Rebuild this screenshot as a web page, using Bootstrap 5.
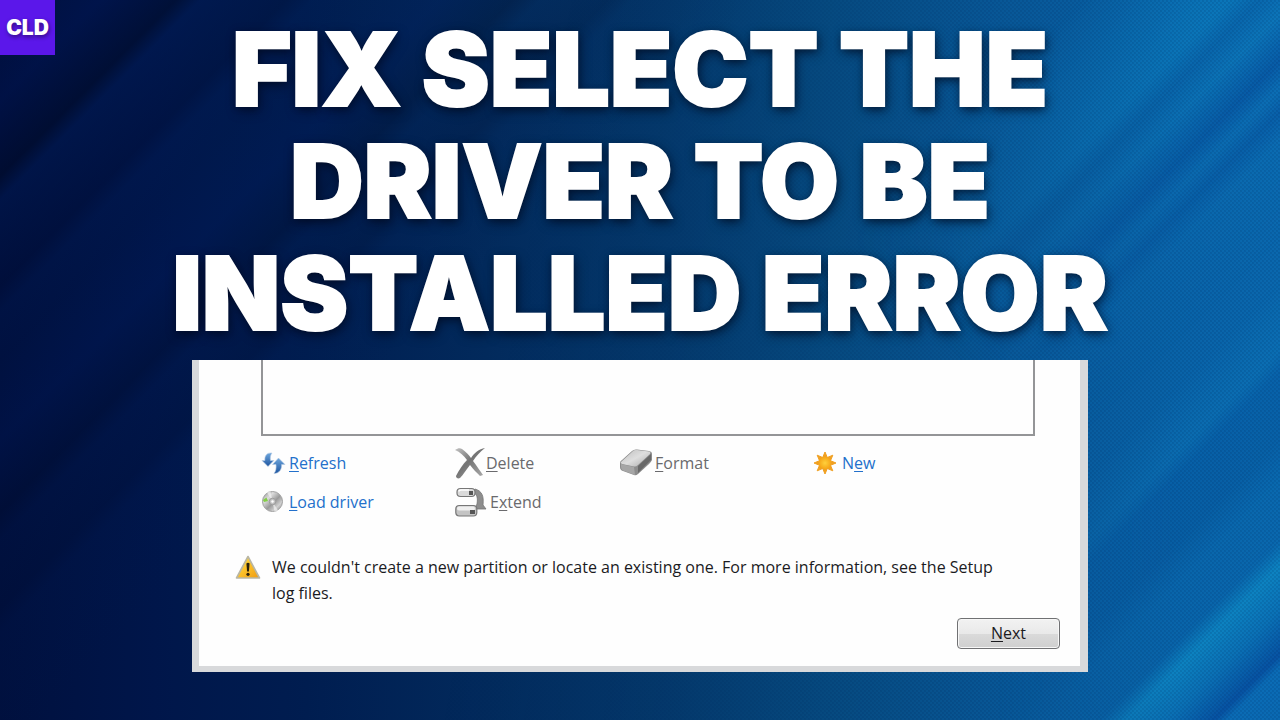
<!DOCTYPE html>
<html lang="en">
<head>
<meta charset="utf-8">
<meta name="viewport" content="width=device-width, initial-scale=1">
<title>Fix Select The Driver To Be Installed Error</title>
<link href="https://cdn.jsdelivr.net/npm/bootstrap@5.3.0/dist/css/bootstrap.min.css" rel="stylesheet">
<style>
  body {
    font: 16px/26px "Open Sans", "Noto Sans", sans-serif;
    background:
      /* dark folds on the left */
      linear-gradient(135deg,
        rgba(0,8,40,.1) 0%, rgba(0,20,90,.25) 5%, rgba(0,8,32,.45) 8.8%, rgba(0,26,84,.4) 10%,
        rgba(0,10,48,.25) 14.3%, rgba(0,28,88,.2) 15.6%, rgba(0,24,80,.1) 18%,
        rgba(0,24,90,.25) 22%, rgba(0,8,34,.25) 25.6%, rgba(0,20,66,.1) 27%, rgba(0,12,46,.2) 30.4%,
        rgba(0,26,80,.1) 31.6%, rgba(0,26,80,0) 38%),
      linear-gradient(90deg, #00103e 0%, #00164a 12%, #001d50 24%, #022a5c 38%, #04386b 52%, #064a80 65%, #085898 79%, #0963a8 92%, #0a68ae 100%);
  }
  /* light rays, each layer fading out towards the lower left */
  .rays-high {
    background: linear-gradient(135deg,
      rgba(12,130,195,0) 54%, rgba(12,130,195,.6) 61.5%, rgba(10,110,180,.2) 63%, rgba(14,130,195,.5) 64.7%,
      rgba(5,80,160,.5) 67%, rgba(14,120,190,.45) 68.4%, rgba(5,80,160,.35) 69.6%,
      rgba(14,116,186,.4) 71%, rgba(10,105,178,0) 76%);
    -webkit-mask-image: linear-gradient(45deg, transparent 66%, #000 95%);
    mask-image: linear-gradient(45deg, transparent 66%, #000 95%);
  }
  .rays-low {
    background: linear-gradient(135deg,
      rgba(14,124,190,0) 78%, rgba(14,124,190,.35) 81.5%, rgba(5,90,165,.35) 82.6%, rgba(5,86,156,.35) 86%,
      rgba(10,110,180,.3) 88%, rgba(10,105,175,.25) 91%, rgba(14,138,198,.8) 92.3%, rgba(12,120,188,.6) 94.5%,
      rgba(6,78,160,.8) 96.7%, rgba(12,112,188,.6) 97.4%, rgba(12,108,184,.4) 100%);
    -webkit-mask-image: linear-gradient(90deg, transparent 78%, #000 92%);
    mask-image: linear-gradient(90deg, transparent 78%, #000 92%);
  }
  /* fine woven texture, fading in towards the right */
  .weave {
    background: repeating-conic-gradient(rgba(0,30,80,.12) 0 25%, transparent 0 50%) 0 0 / 4px 4px;
    -webkit-mask-image: linear-gradient(100deg, transparent 40%, #000 75%);
    mask-image: linear-gradient(100deg, transparent 40%, #000 75%);
  }
  .brand { width: 55px; height: 55px; background: #5b17ea; font: 900 21px/1 Inter, sans-serif; text-shadow: 1px 2px 4px rgba(0,0,0,.45); }
  .headline { font: 900 102px/112px Inter, sans-serif; padding-top: 13px; margin-bottom: 11px; -webkit-text-stroke: 2px #fff; text-shadow: 2px 4px 12px rgba(0,8,26,.65), 0 2px 6px rgba(0,8,26,.35); }
  .setup { width: 70%; background: #fefefe; border: solid #d8d9db; border-width: 0 8px 6px 7px; color: #1b1b1f; padding-bottom: 17px; }
  .inset { margin: 0 45px 0 62px; }
  .partitions { height: 76px; border: solid #949597; border-width: 0 2px 2px; }
  .tools { display: grid; grid-template-columns: 194fr 165fr 194fr 221fr; grid-auto-rows: 39px; padding-top: 7px; }
  .tool { border: 0; background: none; padding: 0; color: #2370cb; text-decoration: none; white-space: nowrap; justify-self: start; }
  .tool:disabled { color: #6a6a6d; }
  .tool u, .next u { text-underline-offset: 2px; text-decoration-thickness: 1px; }
  .slim { width: 28px; flex: none; }
  .mid { width: 31px; flex: none; }
  .wide { width: 35px; flex: none; }
  .notice { margin: 33px 45px 12px 36px; gap: 11px; }
  .next { width: 103px; height: 31px; margin-right: 20px; padding: 0 0 2px; border: 1px solid #707173; border-radius: 4px; box-shadow: inset 0 0 0 1px #f7f7f7; background: linear-gradient(#f2f2f2 0, #e9e9e9 50%, #dadada 52%, #cfcfcf 100%); color: #1b1b1f; font-size: 16px; line-height: 26px; }
</style>
</head>
<body class="min-vh-100 position-relative">
<div class="rays-high position-absolute top-0 start-0 w-100 h-100"></div>
<div class="rays-low position-absolute top-0 start-0 w-100 h-100"></div>
<div class="weave position-absolute top-0 start-0 w-100 h-100"></div>
<header class="brand position-absolute top-0 start-0 d-flex align-items-center justify-content-center text-white">CLD</header>
<main class="position-relative d-flex flex-column align-items-center">
  <h1 class="headline text-white text-center text-nowrap">FIX SELECT THE<br>DRIVER TO BE<br>INSTALLED ERROR</h1>
  <section class="setup">
    <div class="inset">
      <div class="partitions"></div>
      <div class="tools">
        <a class="tool d-flex align-items-center" href="#">
          <svg class="slim" height="24" viewBox="0 0 28 24">
            <defs><linearGradient id="blue" x2="0" y2="1"><stop stop-color="#6fa8de"/><stop offset="1" stop-color="#1d549f"/></linearGradient></defs>
            <path d="M11 2C5.500 1.500 3.500 5 3.900 9.500H1L7 15.500 12.800 9.500H9.500C9 6 9.500 4 11 2Z" fill="url(#blue)" stroke="#b9cce4" stroke-width=".6"/>
            <path d="M13 22.500C18.500 22.500 21 18 20.600 13.500H24L17.500 7 11.500 13.500H15C15.300 17 15 20 13 22.500Z" fill="url(#blue)" stroke="#b9cce4" stroke-width=".6"/>
          </svg><span><u>R</u>efresh</span></a>
        <button class="tool d-flex align-items-center" type="button" disabled>
          <svg class="mid" height="32" viewBox="0 0 31 32">
            <defs><linearGradient id="cross" x2="1" y2="1"><stop stop-color="#c4c4c4"/><stop offset=".45" stop-color="#747474"/><stop offset="1" stop-color="#b0b0b0"/></linearGradient></defs>
            <path d="M0 3C3 1 5 1 7 2 11 5 14 8 16 11 19 6 24 2 30 1 25 5 21 9 18 14 22 19 25 24 28 28L25 29C22 26 18 22 15 18 11 23 8 28 5 31 3 32 1 31 1 29 4 23 8 17 12 13 9 9 5 5 0 3Z" fill="url(#cross)"/>
          </svg><span><u>D</u>elete</span></button>
        <button class="tool d-flex align-items-center" type="button" disabled>
          <svg class="wide" height="30" viewBox="0 0 35 30">
            <defs><linearGradient id="top" x2="1" y2="1"><stop stop-color="#bdbdbd"/><stop offset=".5" stop-color="#dedede"/><stop offset="1" stop-color="#a9a9a9"/></linearGradient></defs>
            <path d="M0 15Q0 13 2 12L12 3Q14 1 17 1.500L29 3Q32 3.500 32 6V12Q31 14 29 16L18 26Q16 28 14 27L3 23Q0 22 0 19Z" fill="#8c8c8c"/>
            <path d="M1 14 13 3Q14 1.500 17 2L29 3.500Q31 4 30 6L18 17Q16 19 14 18.500L2 16Q0 15 1 14Z" fill="url(#top)"/>
            <path d="M1 16 14 19 15 27 3 22.500Q1 21 1 19Z" fill="#a6a6a6"/><path d="M18 18 31 6V12L18 25Z" fill="#686868"/>
          </svg><span><u>F</u>ormat</span></button>
        <a class="tool d-flex align-items-center" href="#">
          <svg class="slim" height="24" viewBox="0 0 28 24">
            <defs><radialGradient id="sun"><stop stop-color="#ffd03c"/><stop offset="1" stop-color="#f6a516"/></radialGradient></defs>
            <path d="M11 1 13.300 6.500 18.800 4.200 16.500 9.700 22 12 16.500 14.300 18.800 19.800 13.300 17.500 11 23 8.700 17.500 3.200 19.800 5.500 14.300 0 12 5.500 9.700 3.200 4.200 8.700 6.500Z" fill="#f0a022" stroke="#f0a022" stroke-linejoin="round"/>
            <circle cx="11" cy="12" r="6.200" fill="url(#sun)"/>
          </svg><span>N<u>e</u>w</span></a>
        <a class="tool d-flex align-items-center" href="#">
          <svg class="slim" height="24" viewBox="0 0 28 24">
            <defs><linearGradient id="disc" x2="1" y2="1"><stop stop-color="#8f8f8f"/><stop offset=".3" stop-color="#dcdcdc"/><stop offset=".55" stop-color="#9a9a9a"/><stop offset=".75" stop-color="#d0d0d0"/><stop offset="1" stop-color="#7b7b7b"/></linearGradient></defs>
            <circle cx="11.500" cy="11.500" r="10" fill="url(#disc)" stroke="#a0a0a0"/>
            <path d="M11.500 11.500 6 2.500 9.500 1.500ZM11.500 11.500 17 20.500 13.500 21.500Z" fill="#f1f1f1" opacity=".7"/>
            <path d="M2 10 5.500 7.500 7 11 3 12Z" fill="#83cf45"/>
            <circle cx="11.500" cy="11.500" r="3.200" fill="#c4c4c4" stroke="#9a9a9a"/><circle cx="11.500" cy="11.500" r="1.200" fill="#fff"/>
          </svg><span><u>L</u>oad driver</span></a>
        <button class="tool d-flex align-items-center" type="button" disabled>
          <svg class="wide" height="32" viewBox="0 0 35 32">
            <path d="M20 3C27 5 29 10 28 19L31 23H20L22 18C23 12 22 8 18 6Z" fill="#8d8d8d" stroke="#747474" stroke-width=".8"/>
            <rect x="2" y="2.500" width="18" height="8" rx="3.500" fill="#dadada" stroke="#777" stroke-width="1.200"/><path d="M4 5.500Q4 4 6 4H14" stroke="#fff" stroke-width="1.500" fill="none"/><rect x="14" y="5" width="4" height="4" fill="#555"/>
            <rect x=".8" y="19.500" width="21" height="10.500" rx="3.500" fill="#c4c4c4" stroke="#777" stroke-width="1.200"/><rect x="2" y="20.500" width="18" height="4" rx="2" fill="#efefef"/><rect x="15" y="24" width="5" height="4" fill="#555"/>
          </svg><span>E<u>x</u>tend</span></button>
      </div>
    </div>
    <div class="notice d-flex align-items-start">
      <svg class="flex-shrink-0" width="26" height="26" viewBox="0 0 26 26">
        <defs><linearGradient id="warn" x2="1" y2="1"><stop stop-color="#ffe95a"/><stop offset=".5" stop-color="#fbc02a"/><stop offset="1" stop-color="#ef9a10"/></linearGradient></defs>
        <path d="M13 2.500 24.500 24H1.500Z" fill="url(#warn)" stroke="#b9b6a4" stroke-width="1.600" stroke-linejoin="round"/>
        <path d="M11.400 9.500Q13 8 14.600 9.500L13.900 17.500H12.100Z" fill="#2a220c"/><circle cx="13" cy="20.300" r="1.600" fill="#2a220c"/>
      </svg>
      <p class="mb-0">We couldn't create a new partition or locate an existing one. For more information, see the Setup<br>log files.</p>
    </div>
    <div class="d-flex justify-content-end">
      <button class="next d-flex align-items-center justify-content-center" type="button"><span><u>N</u>ext</span></button>
    </div>
  </section>
</main>
<script src="https://cdn.jsdelivr.net/npm/bootstrap@5.3.0/dist/js/bootstrap.bundle.min.js"></script>
</body>
</html>
